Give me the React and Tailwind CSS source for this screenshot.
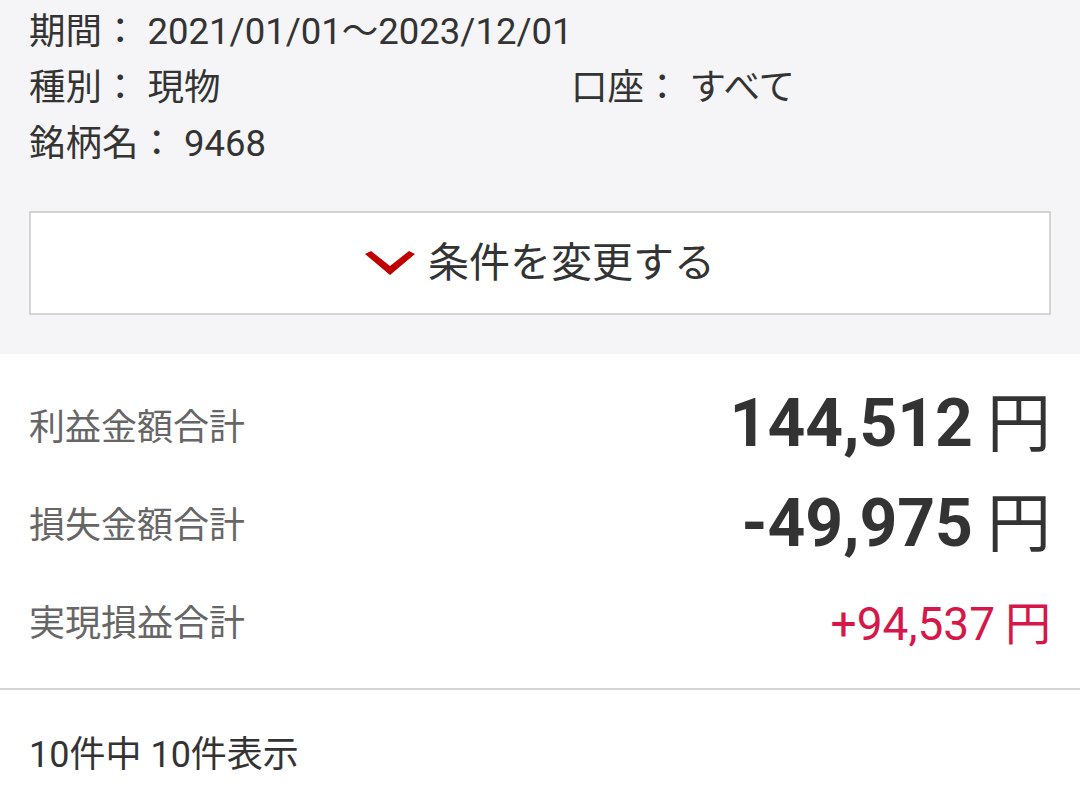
export default function App() {
  const font = { fontFamily: 'Roboto, "Noto Sans CJK JP", sans-serif' };
  return (
    <div className="w-[1080px] h-[809px] bg-white overflow-hidden" style={font}>
      <div className="bg-[#f5f5f7] px-[29px] pt-[4px] pb-[39px]">
        <div className="text-[36.5px] leading-[56px] text-[#333]">
          <div>期間： 2021/01/01〜2023/12/01</div>
          <div className="flex">
            <div className="w-[542px]">種別： 現物</div>
            <div>口座： すべて</div>
          </div>
          <div>銘柄名： 9468</div>
        </div>
        <div className="mt-[39px] h-[104px] bg-white border-2 border-[#d4d4d4] flex items-center justify-center gap-[13px]">
          <svg width="50" height="26" viewBox="0 0 50 26" className="mt-[2px]">
            <polygon points="0,3 6,0 25,15 44,0 50,3 25,24" fill="#c00000" />
          </svg>
          <span className="text-[41px] leading-none text-[#333]">条件を変更する</span>
        </div>
      </div>
      <div className="px-[29px] pt-[25px] pb-[15px]">
        <div className="h-[98px] flex items-center justify-between">
          <span className="text-[36px] text-[#666]">利益金額合計</span>
          <span className="text-[#333] flex items-baseline -mt-[10px]">
            <span className="text-[66px] font-bold">144,512</span>
            <span className="text-[64px] ml-[14px]">円</span>
          </span>
        </div>
        <div className="h-[98px] flex items-center justify-between">
          <span className="text-[36px] text-[#666]">損失金額合計</span>
          <span className="text-[#333] flex items-baseline -mt-[6px]">
            <span className="text-[66px] font-bold">-49,975</span>
            <span className="text-[64px] ml-[14px]">円</span>
          </span>
        </div>
        <div className="h-[98px] flex items-center justify-between">
          <span className="text-[36px] text-[#666]">実現損益合計</span>
          <span className="text-[#d6174a] flex items-baseline">
            <span className="text-[46px]">+94,537</span>
            <span className="text-[46px] ml-[10px]">円</span>
          </span>
        </div>
      </div>
      <div className="h-[2px] bg-[#d4d4d4]"></div>
      <div className="px-[29px] mt-[37px] text-[36px] leading-[56px] text-[#333]">10件中 10件表示</div>
    </div>
  );
}
